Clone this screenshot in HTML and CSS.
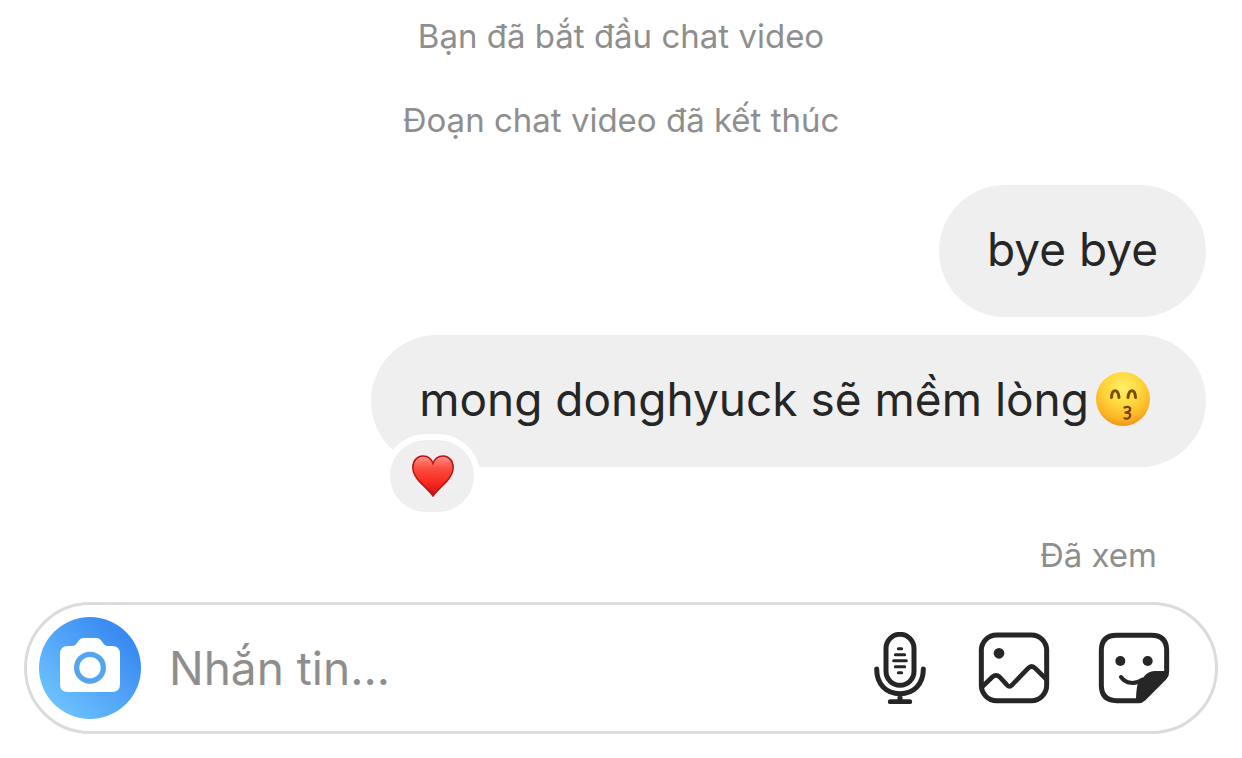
FILE: index.html
```html
<!DOCTYPE html>
<html lang="vi">
<head>
    <meta charset="UTF-8">
    <meta name="viewport" content="width=device-width, initial-scale=1.0">
    <title>Chat</title>
    <link rel="stylesheet" href="styles.css">
</head>
<body>
    <main class="chat">
        <p class="notice">Bạn đã bắt đầu chat video</p>
        <p class="notice">Đoạn chat video đã kết thúc</p>

        <div class="messages">
            <div class="bubble">bye bye</div>
            <div class="bubble">
                <span>mong donghyuck sẽ mềm lòng</span>
                <svg class="emoji" viewBox="0 0 54 54" role="img" aria-label="kissing face">
                    <defs>
                        <radialGradient id="face" cx="50%" cy="30%" r="72%">
                            <stop offset="0" stop-color="#fff06a"/>
                            <stop offset="0.45" stop-color="#ffd73c"/>
                            <stop offset="0.8" stop-color="#fcb423"/>
                            <stop offset="1" stop-color="#ec8f16"/>
                        </radialGradient>
                    </defs>
                    <circle cx="27" cy="27" r="27" fill="url(#face)"/>
                    <path d="M15.500 25.500C16 16.500 22 16.500 23 25.500M32 25.500C33 16.500 39 16.500 39.500 25.500" fill="none" stroke="#7a4d10" stroke-width="3" stroke-linecap="round"/>
                    <path d="M28.500 35.500C32 34 35 35.500 34 38 33.300 39.700 31.500 40.300 29.500 40.700 33 40.700 35 42 34 44.500 33.200 46.500 30.500 47 28.500 46.300" fill="none" stroke="#7a4210" stroke-width="2.200" stroke-linecap="round" stroke-linejoin="round"/>
                </svg>
                <button class="reaction" aria-label="Heart">
                    <svg class="heart" viewBox="0 0 42 42">
                        <defs>
                            <linearGradient id="heart" x1="0" y1="0" x2="0" y2="1">
                                <stop offset="0" stop-color="#ff9182"/>
                                <stop offset="0.3" stop-color="#fa4f42"/>
                                <stop offset="0.65" stop-color="#fb2a20"/>
                                <stop offset="1" stop-color="#c90f12"/>
                            </linearGradient>
                        </defs>
                        <path d="M21 41C17 35 10 30 5 23.500 2.500 20 .8 16.500 .8 12.500 .8 5.500 5.500 1 11 1 15.800 1 19.400 4 21 8.500 22.600 4 26.200 1 31 1 36.500 1 41.200 5.500 41.200 12.500 41.200 16.500 39.500 20 37 23.500 32 30 25 35 21 41z" fill="url(#heart)" stroke="#b5161a" stroke-width="1.500"/>
                    </svg>
                </button>
            </div>
        </div>

        <p class="seen">Đã xem</p>

        <form class="composer">
            <button type="button" class="camera" aria-label="Camera">
                <svg viewBox="0 0 180 162">
                    <path d="M24 24H36C44 24 47 21 51 15L57 7Q62 0 71 0H109Q118 0 123 7L129 15C133 21 136 24 144 24H156Q180 24 180 48V138Q180 162 156 162H24Q0 162 0 138V48Q0 24 24 24z" fill="#fff"/>
                    <circle cx="90" cy="89" r="40" fill="none" stroke="#55a5ee" stroke-width="16"/>
                </svg>
            </button>
            <input class="text" type="text" placeholder="Nhắn tin..." aria-label="Nhắn tin">
            <button type="button" class="tool mic" aria-label="Microphone">
                <svg viewBox="30 36 180 216" fill="none" stroke="#262626" stroke-linecap="round">
                    <rect x="78" y="43" width="84" height="153" rx="42" stroke-width="15"/>
                    <path d="M50 147C50 194 80 221 120 221S190 194 190 147M120 222V244M91 245H149" stroke-width="15"/>
                    <path d="M115 86H125M106 104H134M101 122H139M106 140H134M115 158H125" stroke-width="9"/>
                </svg>
            </button>
            <button type="button" class="tool" aria-label="Photo">
                <svg viewBox="27 38 216 216" fill="none" stroke="#262626" stroke-width="15" stroke-linejoin="round">
                    <rect x="37" y="47" width="196" height="197" rx="46"/>
                    <circle cx="90" cy="102" r="16" fill="#262626" stroke="none"/>
                    <path d="M38 204L70 173Q81 163 92 173L113 196Q121 206 129 197L177 147Q188 136 199 147L233 181" stroke-width="14"/>
                </svg>
            </button>
            <button type="button" class="tool" aria-label="Sticker">
                <svg viewBox="24 36 216 216" fill="none" stroke="#262626" stroke-width="15" stroke-linejoin="round" stroke-linecap="round">
                    <path d="M230 154V92Q230 46 184 46H80Q34 46 34 92V196Q34 242 80 242H146Q154 242 160 236L223 173Q230 165 230 154z"/>
                    <path d="M138 243C138 228 139 209 143 190C159 180 165 153 194 153H236V160Q236 168 230 174L164 240Q158 246 150 246z" fill="#262626" stroke="none"/>
                    <path d="M93 171C108 192 135 194 157 179" stroke-width="12"/>
                    <circle cx="91" cy="123" r="15" fill="#262626" stroke="none"/>
                    <circle cx="173" cy="123" r="15" fill="#262626" stroke="none"/>
                </svg>
            </button>
        </form>
    </main>
</body>
</html>
```
FILE: styles.css
```css
*{
    box-sizing: border-box;
}
body{
    margin: 0;
    background-color: #fff;
    color: #262626;
    font-family: Inter, "Noto Sans", sans-serif;
}
button{
    border: none;
    padding: 0;
    cursor: pointer;
}
svg{
    display: block;
}
.chat{
    display: flex;
    flex-direction: column;
    padding: 14px 24px 24px;
}
.notice{
    margin: 0 0 40px;
    text-align: center;
    font-size: 33px;
    line-height: 44px;
    color: #8e8e8e;
}
.messages{
    display: flex;
    flex-direction: column;
    align-items: flex-end;
    gap: 18px;
    padding: 3px 12px 0;
}
.bubble{
    position: relative;
    display: flex;
    align-items: center;
    gap: 7px;
    padding: 34px 48px 38px;
    border-radius: 66px;
    background-color: #efefef;
    font-size: 46px;
    line-height: 60px;
}
.emoji{
    width: 54px;
    height: 54px;
    margin-right: 8px;
}
/* sits over the lower left edge of the bubble */
.reaction{
    position: absolute;
    left: 13px;
    bottom: -51px;
    display: flex;
    align-items: center;
    justify-content: center;
    width: 96px;
    height: 84px;
    padding-left: 2px;
    border: 6px solid #fff;
    border-radius: 42px;
    background-color: #efefef;
}
.heart{
    width: 42px;
    height: 42px;
}
.seen{
    margin: 66px 61px 25px;
    text-align: right;
    font-size: 33px;
    line-height: 44px;
    color: #8e8e8e;
}
.composer{
    display: flex;
    align-items: center;
    gap: 48px;
    height: 132px;
    padding: 0 45px 0 12px;
    border: 3px solid #dbdbdb;
    border-radius: 66px;
}
.camera{
    display: flex;
    align-items: center;
    justify-content: center;
    flex: none;
    width: 102px;
    height: 102px;
    border-radius: 50%;
    background: linear-gradient(45deg, #6fc5ff 10%, #3484f0 90%);
}
.camera svg{
    width: 60px;
    height: 54px;
    margin-bottom: 6px;
}
.text{
    flex: 1;
    min-width: 0;
    margin-left: -20px;
    padding: 0;
    border: none;
    outline: none;
    background: none;
    font-family: inherit;
    font-size: 46px;
    line-height: 60px;
    color: #262626;
}
.text::placeholder{
    color: #8e8e8e;
    opacity: 1;
}
.tool{
    flex: none;
    width: 72px;
    height: 72px;
    background: none;
}
.mic{
    width: 60px;
}
```
